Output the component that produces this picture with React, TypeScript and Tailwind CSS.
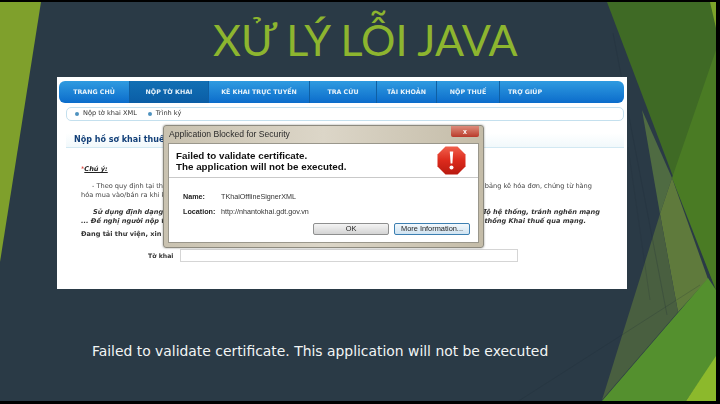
const tabs = [
  { label: "TRANG CHỦ", w: "w-[71px]", active: false },
  { label: "NỘP TỜ KHAI", w: "w-[79px]", active: true },
  { label: "KÊ KHAI TRỰC TUYẾN", w: "w-[101px]", active: false },
  { label: "TRA CỨU", w: "w-[67px]", active: false },
  { label: "TÀI KHOẢN", w: "w-[60px]", active: false },
  { label: "NỘP THUẾ", w: "w-[63px]", active: false },
];

function SlideArt() {
  return (
    <svg className="absolute inset-0 h-full w-full" viewBox="0 2 716 399" preserveAspectRatio="none">
      <polygon points="0,2 41,2 0,262" fill="#7fa02c" />
      <polygon points="607,2 716,2 716,290" fill="#3f6a25" />
      <polygon points="716,50 716,290 672,178" fill="#4a7b24" />
      <polygon points="710,2 716,2 716,28" fill="#7da32a" />
      <polygon points="642,110 672,178 660,214" fill="#4f6b42" />
      <polygon points="672,178 708,279 678,312 660,214" fill="#5f7a3c" />
      <polygon points="660,214 678,312 602,400" fill="#495f40" />
      <polygon points="602,401 708,278 716,290 716,358 686,401" fill="#54902e" />
      <polygon points="686,401 716,356 716,401" fill="#8cb92c" />
      <line x1="517" y1="402" x2="700" y2="285" stroke="#1f2c36" strokeOpacity="0.35" strokeWidth="0.6" />
      <line x1="613" y1="33" x2="667" y2="315" stroke="#1f2c36" strokeOpacity="0.4" strokeWidth="0.6" />
      <line x1="628" y1="147" x2="650" y2="300" stroke="#1f2c36" strokeOpacity="0.3" strokeWidth="0.6" />
    </svg>
  );
}

function StopIcon() {
  return (
    <svg className="h-[29px] w-[29px]" viewBox="0 0 29 29">
      <defs>
        <linearGradient id="stop" x1="0" y1="0" x2="0" y2="1">
          <stop offset="0" stopColor="#f0604c" />
          <stop offset="0.5" stopColor="#dc2a1c" />
          <stop offset="1" stopColor="#b81a10" />
        </linearGradient>
      </defs>
      <polygon points="8.5,0.5 20.5,0.5 28.5,8.5 28.5,20.5 20.5,28.5 8.5,28.5 0.5,20.5 0.5,8.5" fill="url(#stop)" />
      <polygon points="12.8,5.5 16.2,5.5 15.4,17.5 13.6,17.5" fill="#fff" />
      <circle cx="14.5" cy="21.5" r="2" fill="#fff" />
    </svg>
  );
}

function SecurityDialog() {
  return (
    <div className="absolute left-[106px] top-[48px] flex h-[123px] w-[321px] flex-col rounded-[3px] border border-[#8d8a7f] bg-gradient-to-r from-[#c9c2b0] via-[#dcd6c8] to-[#c4bca8] px-[4px] pb-[4px] font-['Liberation_Sans',sans-serif] shadow-[0_0_2px_rgba(60,60,50,0.6)]">
      <div className="flex h-[17px] shrink-0 items-start justify-between">
        <span className="pl-[1px] pt-[3px] text-[8.6px] leading-[11px] text-[#2b2b2b]">Application Blocked for Security</span>
        <span className="flex h-[11px] w-[28px] items-center justify-center rounded-b-[2px] bg-gradient-to-b from-[#dd8c7c] to-[#b8382a] text-[7px] font-bold leading-none text-white">
          x
        </span>
      </div>
      <div className="flex flex-1 flex-col border border-[#9a978c] bg-white">
        <div className="flex h-[34px] shrink-0 justify-between border-b border-[#c9c9c9] pl-[7px] pr-[12px]">
          <div className="self-center text-[9.8px] font-bold leading-[11px] text-[#111]">
            <div>Failed to validate certificate.</div>
            <div>The application will not be executed.</div>
          </div>
          <div className="mt-[2px]">
            <StopIcon />
          </div>
        </div>
        <div className="flex flex-1 flex-col pl-[14px] pr-[8px] pt-[14px] text-[7.2px] leading-[9px] text-[#333]">
          <div className="flex">
            <span className="w-[38px] font-bold text-[#222]">Name:</span>
            <span>TKhaiOfflineSignerXML</span>
          </div>
          <div className="mt-[6px] flex">
            <span className="w-[38px] font-bold text-[#222]">Location:</span>
            <span>http://nhantokhai.gdt.gov.vn</span>
          </div>
          <div className="mt-[7px] flex justify-end gap-[5px] text-[#222]">
            <button className="h-[12px] w-[76px] rounded-[2px] border border-[#8e8f8f] bg-gradient-to-b from-[#f4f4f4] to-[#d4d4d4] text-[7.4px] leading-none">
              OK
            </button>
            <button className="h-[12px] w-[76px] rounded-[2px] border border-[#3c7fb1] bg-gradient-to-b from-[#f2f8fc] to-[#cfe3f1] text-[7.4px] leading-none">
              More Information...
            </button>
          </div>
        </div>
      </div>
    </div>
  );
}

function PortalShot() {
  return (
    <div className="relative ml-[57px] mt-[11px] h-[212px] w-[570px] overflow-hidden bg-white font-['DejaVu_Sans',sans-serif] blur-[0.35px]">
      <div className="ml-[2px] mr-[3px] mt-[4px] flex h-[22px] overflow-hidden rounded-[6px] bg-gradient-to-b from-[#2f9be0] to-[#0b6ccb]">
        {tabs.map((t) => (
          <div
            key={t.label}
            className={`flex ${t.w} shrink-0 items-center justify-center border-r border-[#0f5fa3] text-[6.3px] font-bold text-[#e6f2fa] ${
              t.active ? "bg-gradient-to-b from-[#1270b4] to-[#0a5da6]" : ""
            }`}
          >
            {t.label}
          </div>
        ))}
        <div className="flex flex-1 items-center pl-[8px] text-[6.3px] font-bold text-[#e6f2fa]">TRỢ GIÚP</div>
      </div>
      <div className="ml-[9px] mr-[3px] mt-[4px] flex h-[14px] items-center rounded-[5px] border border-[#c4e0ee] pl-[8px] text-[6.6px] text-[#333]">
        <span className="h-[4px] w-[4px] rounded-full bg-[#4e92bf]" />
        <span className="ml-[4px]">Nộp tờ khai XML</span>
        <span className="ml-[11px] h-[4px] w-[4px] rounded-full bg-[#4e92bf]" />
        <span className="ml-[4px]">Trình ký</span>
      </div>
      <div className="ml-[9px] mr-[3px] mt-[12px] flex h-[15px] items-center border-b border-[#d2e8f2] bg-gradient-to-b from-white to-[#f1f8fb] pl-[8px] text-[8px] font-bold text-[#123f78]">
        Nộp hồ sơ khai thuế
      </div>
      <div className="pl-[24px] pr-[27px] text-[6.6px] leading-[9px] text-[#444]">
        <div className="mt-[17px] italic text-[#222]">
          <span className="not-italic text-[#d8342c]">*</span>
          <span className="font-semibold underline">Chú ý:</span>
        </div>
        <div className="mt-[8px] flex justify-between">
          <span className="whitespace-nowrap pl-[11px]">- Theo quy định tại thông tư của</span>
          <span className="whitespace-nowrap pr-[8px]">bảng kê hóa đơn, chứng từ hàng</span>
        </div>
        <div className="whitespace-nowrap">hóa mua vào/bán ra khi kê khai</div>
        <div className="mt-[8px] flex justify-between font-semibold italic text-[#333]">
          <span className="whitespace-nowrap pl-[12px]">Sử dụng định dạng mới</span>
          <span className="whitespace-nowrap">độ hệ thống, tránh nghẽn mạng</span>
        </div>
        <div className="flex justify-between font-semibold italic text-[#333]">
          <span className="whitespace-nowrap">... Đề nghị người nộp thuế</span>
          <span className="whitespace-nowrap pr-[14px]">ố thống Khai thuế qua mạng.</span>
        </div>
        <div className="mt-[4px] whitespace-nowrap font-semibold text-[#333]">Đang tải thư viện, xin vui lòng</div>
      </div>
      <div className="mt-[10px] flex items-center">
        <span className="ml-[91px] w-[32px] text-[6.2px] font-bold text-[#333]">Tờ khai</span>
        <div className="h-[13px] w-[338px] border border-[#d5d5d5] bg-white" />
      </div>
      <SecurityDialog />
    </div>
  );
}

export default function App() {
  return (
    <div className="h-[404px] w-[720px] overflow-hidden bg-black pb-[3px] pr-[4px] pt-[2px]">
      <div className="relative flex h-full flex-col bg-[#2a3a46]">
        <SlideArt />
        <h1 className="relative ml-[213px] mt-[12px] h-[52px] whitespace-nowrap font-['Lato',sans-serif] text-[43px] font-normal leading-[52px] text-[#8db52f]">
          XỬ LÝ LỖI JAVA
        </h1>
        <PortalShot />
        <p className="relative ml-[92px] mt-[52px] font-['DejaVu_Sans',sans-serif] text-[13.9px] leading-[20px] text-[#f2f5f5]">
          Failed to validate certificate. This application will not be executed
        </p>
      </div>
    </div>
  );
}
